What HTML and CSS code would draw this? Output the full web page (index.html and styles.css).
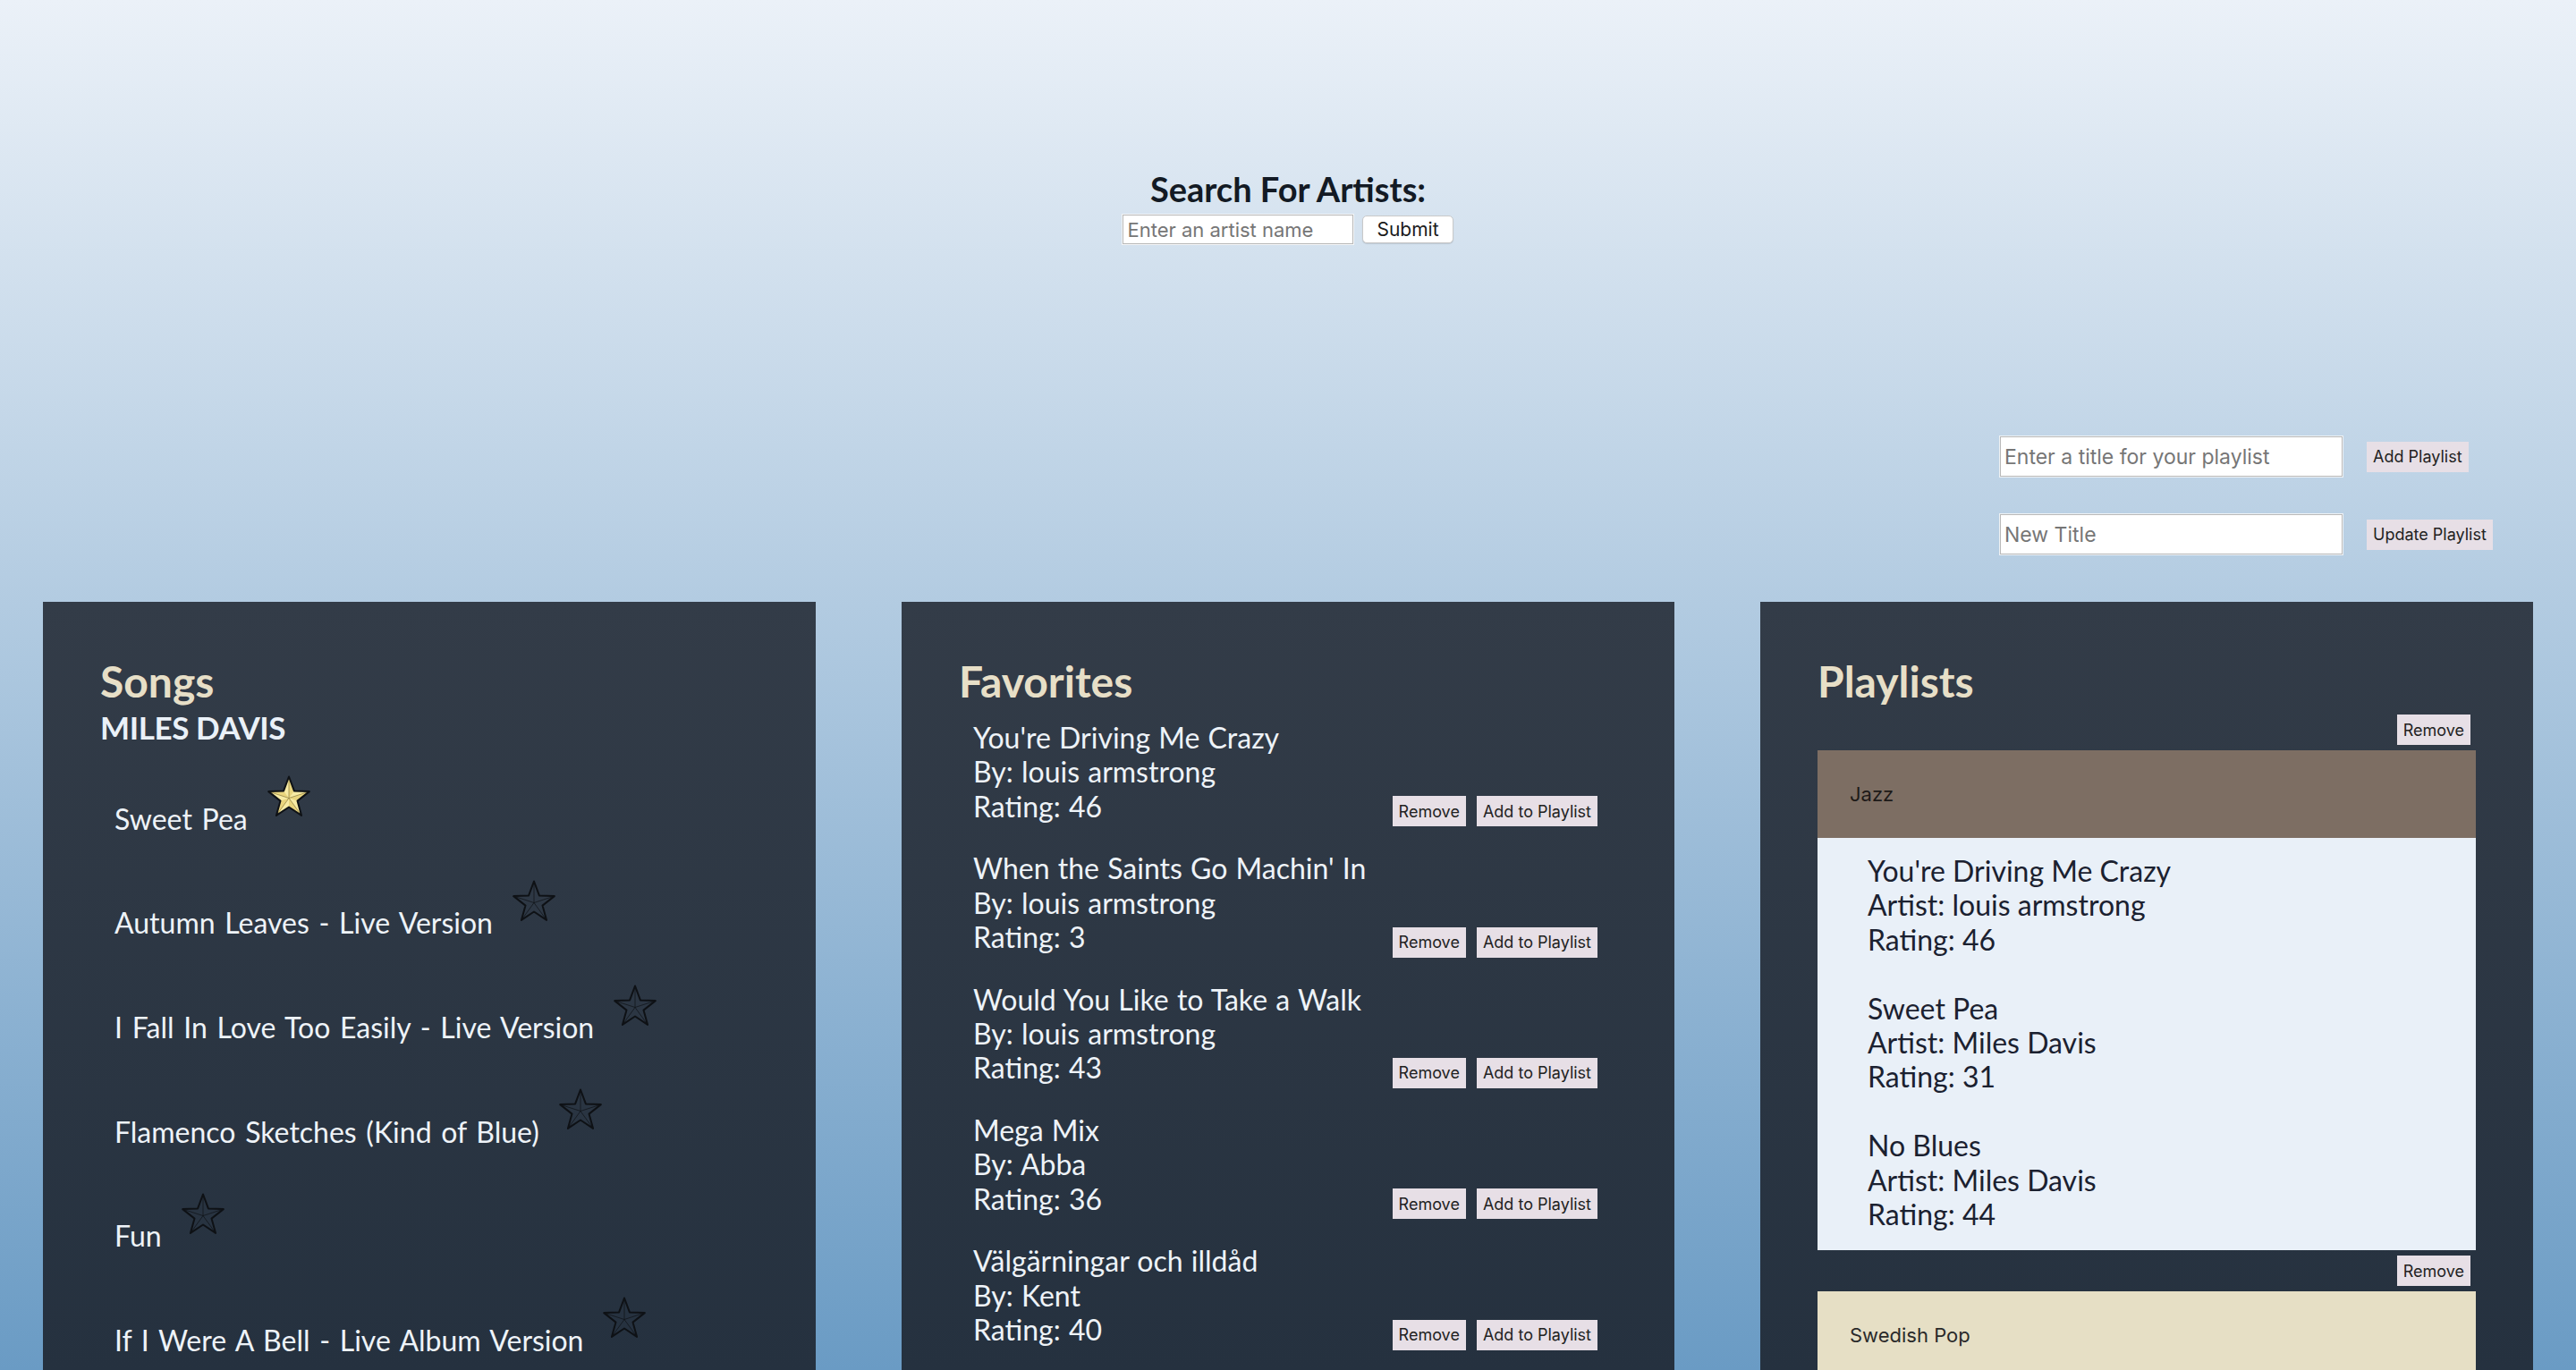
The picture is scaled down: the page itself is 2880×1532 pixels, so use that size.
FILE: index.html
```html
<!DOCTYPE html>
<html lang="en">
<head>
<meta charset="utf-8">
<title>Music App</title>
<link rel="stylesheet" href="styles.css">
</head>
<body>
<div class="page">
  <section class="search">
    <h3 class="search-title">Search For Artists:</h3>
    <form class="search-form">
      <input class="search-input" type="text" placeholder="Enter an artist name">
      <button class="submit-btn" type="button">Submit</button>
    </form>
  </section>

  <section class="playlist-form-wrap">
    <div class="playlist-form">
      <div class="pf-row">
        <input class="pf-input" type="text" placeholder="Enter a title for your playlist">
        <button class="btn" type="button">Add Playlist</button>
      </div>
      <div class="pf-row">
        <input class="pf-input" type="text" placeholder="New Title">
        <button class="btn" type="button">Update Playlist</button>
      </div>
    </div>
  </section>

  <main class="panels">
    <section class="panel">
      <h2 class="panel-title">Songs</h2>
      <h3 class="artist">MILES DAVIS</h3>
      <ul class="song-list">
        <li class="song"><span class="song-name">Sweet Pea</span>
          <svg class="star star-on" viewBox="0 0 50 50"><path class="star-shape" d="M25 2.5 L30.9 18.4 L47.8 19.1 L34.5 29.6 L39.1 45.9 L25 36.5 L10.9 45.9 L15.5 29.6 L2.2 19.1 L19.1 18.4 Z"/><path class="star-dark" d="M25 26.5 L25 2.5 L30.9 18.4 Z M25 26.5 L47.8 19.1 L34.5 29.6 Z M25 26.5 L39.1 45.9 L25 36.5 Z M25 26.5 L10.9 45.9 L15.5 29.6 Z M25 26.5 L2.2 19.1 L19.1 18.4 Z"/><path class="star-facets" d="M25 26.5 L25 2.5 M25 26.5 L47.8 19.1 M25 26.5 L39.1 45.9 M25 26.5 L10.9 45.9 M25 26.5 L2.2 19.1"/><path class="star-edge" d="M25 2.5 L30.9 18.4 L47.8 19.1 L34.5 29.6 L39.1 45.9 L25 36.5 L10.9 45.9 L15.5 29.6 L2.2 19.1 L19.1 18.4 Z"/></svg>
        </li>
        <li class="song"><span class="song-name">Autumn Leaves - Live Version</span>
          <svg class="star" viewBox="0 0 50 50"><path class="star-facets" d="M25 26.5 L25 2.5 M25 26.5 L47.8 19.1 M25 26.5 L39.1 45.9 M25 26.5 L10.9 45.9 M25 26.5 L2.2 19.1"/><path class="star-edge" d="M25 2.5 L30.9 18.4 L47.8 19.1 L34.5 29.6 L39.1 45.9 L25 36.5 L10.9 45.9 L15.5 29.6 L2.2 19.1 L19.1 18.4 Z"/></svg>
        </li>
        <li class="song"><span class="song-name">I Fall In Love Too Easily - Live Version</span>
          <svg class="star" viewBox="0 0 50 50"><path class="star-facets" d="M25 26.5 L25 2.5 M25 26.5 L47.8 19.1 M25 26.5 L39.1 45.9 M25 26.5 L10.9 45.9 M25 26.5 L2.2 19.1"/><path class="star-edge" d="M25 2.5 L30.9 18.4 L47.8 19.1 L34.5 29.6 L39.1 45.9 L25 36.5 L10.9 45.9 L15.5 29.6 L2.2 19.1 L19.1 18.4 Z"/></svg>
        </li>
        <li class="song"><span class="song-name">Flamenco Sketches (Kind of Blue)</span>
          <svg class="star" viewBox="0 0 50 50"><path class="star-facets" d="M25 26.5 L25 2.5 M25 26.5 L47.8 19.1 M25 26.5 L39.1 45.9 M25 26.5 L10.9 45.9 M25 26.5 L2.2 19.1"/><path class="star-edge" d="M25 2.5 L30.9 18.4 L47.8 19.1 L34.5 29.6 L39.1 45.9 L25 36.5 L10.9 45.9 L15.5 29.6 L2.2 19.1 L19.1 18.4 Z"/></svg>
        </li>
        <li class="song"><span class="song-name">Fun</span>
          <svg class="star" viewBox="0 0 50 50"><path class="star-facets" d="M25 26.5 L25 2.5 M25 26.5 L47.8 19.1 M25 26.5 L39.1 45.9 M25 26.5 L10.9 45.9 M25 26.5 L2.2 19.1"/><path class="star-edge" d="M25 2.5 L30.9 18.4 L47.8 19.1 L34.5 29.6 L39.1 45.9 L25 36.5 L10.9 45.9 L15.5 29.6 L2.2 19.1 L19.1 18.4 Z"/></svg>
        </li>
        <li class="song"><span class="song-name">If I Were A Bell - Live Album Version</span>
          <svg class="star" viewBox="0 0 50 50"><path class="star-facets" d="M25 26.5 L25 2.5 M25 26.5 L47.8 19.1 M25 26.5 L39.1 45.9 M25 26.5 L10.9 45.9 M25 26.5 L2.2 19.1"/><path class="star-edge" d="M25 2.5 L30.9 18.4 L47.8 19.1 L34.5 29.6 L39.1 45.9 L25 36.5 L10.9 45.9 L15.5 29.6 L2.2 19.1 L19.1 18.4 Z"/></svg>
        </li>
      </ul>
    </section>

    <section class="panel">
      <h2 class="panel-title">Favorites</h2>
      <ul class="fav-list">
        <li class="fav">
          <div class="fav-info"><div>You're Driving Me Crazy</div><div>By: louis armstrong</div><div>Rating: 46</div></div>
          <div class="fav-actions"><button class="btn" type="button">Remove</button><button class="btn" type="button">Add to Playlist</button></div>
        </li>
        <li class="fav">
          <div class="fav-info"><div>When the Saints Go Machin' In</div><div>By: louis armstrong</div><div>Rating: 3</div></div>
          <div class="fav-actions"><button class="btn" type="button">Remove</button><button class="btn" type="button">Add to Playlist</button></div>
        </li>
        <li class="fav">
          <div class="fav-info"><div>Would You Like to Take a Walk</div><div>By: louis armstrong</div><div>Rating: 43</div></div>
          <div class="fav-actions"><button class="btn" type="button">Remove</button><button class="btn" type="button">Add to Playlist</button></div>
        </li>
        <li class="fav">
          <div class="fav-info"><div>Mega Mix</div><div>By: Abba</div><div>Rating: 36</div></div>
          <div class="fav-actions"><button class="btn" type="button">Remove</button><button class="btn" type="button">Add to Playlist</button></div>
        </li>
        <li class="fav">
          <div class="fav-info"><div>Välgärningar och illdåd</div><div>By: Kent</div><div>Rating: 40</div></div>
          <div class="fav-actions"><button class="btn" type="button">Remove</button><button class="btn" type="button">Add to Playlist</button></div>
        </li>
      </ul>
    </section>

    <section class="panel">
      <h2 class="panel-title">Playlists</h2>
      <div class="pl-list">
        <div class="playlist">
          <button class="btn pl-remove" type="button">Remove</button>
          <div class="pl-head pl-jazz">Jazz</div>
          <div class="pl-body">
            <div><div>You're Driving Me Crazy</div><div>Artist: louis armstrong</div><div>Rating: 46</div></div>
            <div><div>Sweet Pea</div><div>Artist: Miles Davis</div><div>Rating: 31</div></div>
            <div><div>No Blues</div><div>Artist: Miles Davis</div><div>Rating: 44</div></div>
          </div>
        </div>
        <div class="playlist">
          <button class="btn pl-remove" type="button">Remove</button>
          <div class="pl-head pl-swedish">Swedish Pop</div>
        </div>
      </div>
    </section>
  </main>
</div>
</body>
</html>
```
FILE: styles.css
```css
html, body {
  margin: 0;
  padding: 0;
  height: 100%;
}

body {
  font-family: Lato, "Noto Sans", sans-serif;
}

.page {
  height: 100vh;
  overflow: hidden;
  display: flex;
  flex-direction: column;
  background: linear-gradient(to bottom, #ebf1f8 0%, #6a9bc4 100%);
}

/* ---------- search ---------- */
.search {
  padding-top: 189px;
  display: flex;
  flex-direction: column;
  align-items: center;
}

.search-title {
  margin: 0;
  font-size: 38px;
  line-height: 44.4px;
  font-weight: 700;
  color: #131a24;
}

.search-form {
  display: flex;
  align-items: center;
  gap: 10px;
  margin: 7px 0 0;
}

.search-input {
  box-sizing: border-box;
  width: 258px;
  height: 33px;
  padding: 0 4px;
  border: 1px solid #b9b9b9;
  box-shadow: 0 0 0 1px #f3f5f7;
  background: #fff;
  font-family: Inter, "Liberation Sans", sans-serif;
  font-size: 22px;
  color: #222;
}

.search-input::placeholder,
.pf-input::placeholder {
  color: #767676;
}

.submit-btn {
  box-sizing: border-box;
  height: 31px;
  padding: 0 15px;
  background: #fff;
  border: 1px solid #c9c9c9;
  border-radius: 5px;
  box-shadow: 0 1px 1px rgba(0, 0, 0, 0.12);
  font-family: Inter, "Liberation Sans", sans-serif;
  font-size: 21px;
  color: #1b1b1b;
}

/* ---------- playlist form ---------- */
.playlist-form-wrap {
  display: flex;
  justify-content: flex-end;
  padding-right: 90px;
  margin-top: 215px;
}

.playlist-form {
  width: 554px;
  display: flex;
  flex-direction: column;
  gap: 42px;
}

.pf-row {
  display: flex;
  align-items: center;
  gap: 27px;
}

.pf-input {
  box-sizing: border-box;
  width: 383px;
  height: 45px;
  padding: 0 4px;
  border: 1px solid #b9b9b9;
  box-shadow: 0 0 0 1px #eef2f5;
  background: #fff;
  font-family: Inter, "Liberation Sans", sans-serif;
  font-size: 23px;
  color: #222;
}

.btn {
  box-sizing: border-box;
  height: 34px;
  padding: 0 7px;
  border: none;
  border-radius: 0;
  background: #e7dfe6;
  font-family: Inter, "Liberation Sans", sans-serif;
  font-size: 18px;
  color: #222;
  white-space: nowrap;
}

/* ---------- panels ---------- */
.panels {
  flex: 1;
  min-height: 0;
  margin-top: 53px;
  display: flex;
  justify-content: space-around;
}

.panel {
  box-sizing: border-box;
  width: 30%;
  padding: 60px 64px 0;
  overflow: hidden;
  background: linear-gradient(to bottom, #333c48 0%, #25313f 100%);
}

.panel-title {
  margin: 0;
  font-size: 48px;
  line-height: 57.6px;
  font-weight: 700;
  color: #e7dfc7;
}

.artist {
  margin: 0;
  font-size: 35px;
  letter-spacing: -0.4px;
  line-height: 44.4px;
  font-weight: 700;
  color: #eaf1f8;
}

/* songs */
.song-list {
  list-style: none;
  margin: 32px 0 0;
  padding: 0 0 0 16px;
  display: flex;
  flex-direction: column;
  gap: 48.8px;
}

.song {
  display: flex;
  align-items: flex-start;
}

.song-name {
  margin-top: 29.4px;
  font-size: 32px;
  line-height: 38.4px;
  word-spacing: 2.5px;
  color: #eef3f8;
}

.star {
  flex: none;
  width: 50px;
  height: 50px;
  margin-left: 21px;
  margin-top: -1px;
}

.star-edge {
  fill: none;
  stroke: #0e1115;
  stroke-width: 2;
  stroke-linejoin: round;
}

.star-facets {
  fill: none;
  stroke: #0e1115;
  stroke-width: 0.7;
}

.star-on .star-shape {
  fill: #f7eba4;
}

.star-on .star-dark {
  fill: #e9d57e;
}

.star-on .star-facets {
  stroke: #8a7a3c;
}

/* favorites */
.fav-list {
  list-style: none;
  margin: 15px 0 0;
  padding: 0;
  display: flex;
  flex-direction: column;
  gap: 28px;
}

.fav {
  display: flex;
  justify-content: space-between;
  align-items: last baseline;
  padding: 0 22px 0 16px;
}

.fav-info {
  font-size: 32px;
  line-height: 38.4px;
  word-spacing: 1px;
  color: #eef3f8;
}

.fav-actions {
  display: flex;
  gap: 12px;
}

/* playlists */
.pl-list {
  margin-top: 8px;
  display: flex;
  flex-direction: column;
  gap: 6px;
}

.playlist {
  display: flex;
  flex-direction: column;
}

.pl-remove {
  align-self: flex-end;
  margin: 0 6px 6px 0;
}

.pl-head {
  box-sizing: border-box;
  height: 98px;
  display: flex;
  align-items: center;
  padding-left: 36px;
  font-family: Inter, "Liberation Sans", sans-serif;
  font-size: 22px;
}

.pl-jazz {
  background: #7d6e63;
  color: #1d1a18;
}

.pl-swedish {
  background: #e6dfc5;
  color: #2a2a2a;
}

.pl-body {
  background: #e9f0f8;
  padding: 18px 56px 21px;
  display: flex;
  flex-direction: column;
  gap: 38.4px;
  font-size: 32px;
  line-height: 38.4px;
  color: #1b2130;
}
```
